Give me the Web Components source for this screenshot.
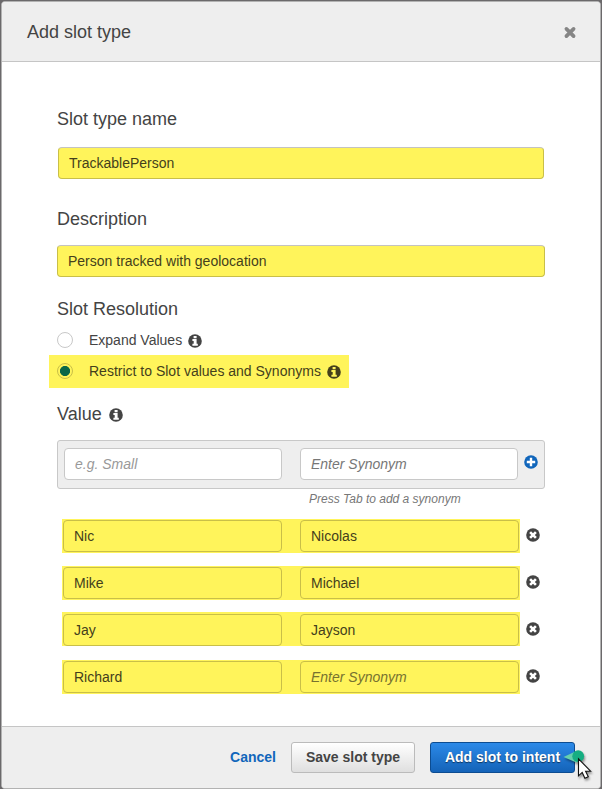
<!DOCTYPE html>
<html lang="en">
<head>
<meta charset="utf-8">
<title>Add slot type</title>
<style>
html,body{margin:0;height:100%;background:#6b696b;font-family:"Liberation Sans",Arial,sans-serif;font-size:14px;line-height:16px;color:#444}
body{overflow:hidden}
.name{margin-top:18px}
.name text-field{margin:0 1px}
.desc{margin-top:30px;--gap:16px}
.resolution{margin-top:22px;--gap:13px}
.values{margin-top:16px;--gap:16px}
</style>
</head>
<body>
<modal-dialog>
  <span slot="title">Add slot type</span>
  <form-group class="name"><span slot="label">Slot type name</span><text-field marked>TrackablePerson</text-field></form-group>
  <form-group class="desc"><span slot="label">Description</span><text-field marked>Person tracked with geolocation</text-field></form-group>
  <form-group class="resolution"><span slot="label">Slot Resolution</span>
    <radio-option>Expand Values</radio-option>
    <radio-option checked>Restrict to Slot values and Synonyms</radio-option>
  </form-group>
  <form-group class="values"><span slot="label">Value</span><glyph-icon slot="label" name="info"></glyph-icon>
    <value-entry></value-entry>
    <value-row><span>Nic</span><span slot="synonym">Nicolas</span></value-row>
    <value-row><span>Mike</span><span slot="synonym">Michael</span></value-row>
    <value-row shifted><span>Jay</span><span slot="synonym">Jayson</span></value-row>
    <value-row blank><span>Richard</span><span slot="synonym">Enter Synonym</span></value-row>
  </form-group>
  <push-button slot="footer" kind="link">Cancel</push-button>
  <push-button slot="footer">Save slot type</push-button>
  <push-button slot="footer" kind="primary">Add slot to intent</push-button>
</modal-dialog>
<click-pointer></click-pointer>
<script>
const define = (name, html) => {
  const t = document.createElement('template');
  t.innerHTML = html;
  customElements.define(name, class extends HTMLElement {
    constructor() {
      super();
      this.attachShadow({mode: 'open'}).append(t.content.cloneNode(true));
    }
  });
};

const glyphs = {
  info: '<svg viewBox="0 0 14 14" width="14" height="14"><circle cx="7" cy="7" r="6.8" fill="currentColor"/><path d="M5.6 2h3v2.2h-3zM4.4 5.1h4.2v4.6h1.2v2H4.4v-2h1.3V7.1H4.4z" fill="var(--hole,#fff)"/></svg>',
  plus: '<svg viewBox="0 0 14 14" width="14" height="14"><circle cx="7" cy="7" r="6.8" fill="currentColor"/><path d="M5.8 2.8h2.4v3h3v2.4h-3v3H5.8v-3h-3V5.8h3z" fill="#fff"/></svg>',
  remove: '<svg viewBox="0 0 14 14" width="14" height="14"><circle cx="7" cy="7" r="6.8" fill="currentColor"/><path d="M4.1 4.1l5.8 5.8M9.9 4.1L4.1 9.9" stroke="#fff" stroke-width="2.6"/></svg>',
  close: '<svg viewBox="0 0 14 14" width="14" height="14"><path d="M3.4 2.9l7.2 7.2M10.6 2.9l-7.2 7.2" stroke="currentColor" stroke-width="3.7" stroke-linecap="round"/></svg>'
};
customElements.define('glyph-icon', class extends HTMLElement {
  constructor() { super(); this.attachShadow({mode: 'open'}); }
  connectedCallback() {
    this.shadowRoot.innerHTML = '<style>:host{display:block;flex:none;width:14px;height:14px}svg{display:block}</style>' + glyphs[this.getAttribute('name')];
  }
});

define('modal-dialog', `<style>
:host{display:flex;flex-direction:column;box-sizing:border-box;width:600px;height:788px;border:1px solid #b2b2b2;border-radius:4px;background:#fff;overflow:hidden}
:host{margin:0 1px;translate:0 1px}
header{box-sizing:border-box;height:60px;background:#eee;border-bottom:1px solid #c5c5c5;display:flex;justify-content:space-between;align-items:flex-start;padding:20px 23px 0 25px;font-size:18px;line-height:20px;flex:none}
header glyph-icon{color:#858585;margin-top:4px}
main{flex:1;padding:29px 55px 0;display:flex;flex-direction:column}
footer{box-sizing:border-box;height:62px;flex:none;background:#eee;border-top:1px solid #c5c5c5;display:flex;justify-content:flex-end;padding:15px 25px 0 0}
</style><header><slot name="title"></slot><glyph-icon name="close"></glyph-icon></header><main><slot></slot></main><footer><slot name="footer"></slot></footer>`);

define('form-group', `<style>
:host{display:block}
.label{display:flex;gap:7px;font-size:18px;line-height:20px;margin-bottom:var(--gap,18px)}
::slotted(glyph-icon){margin-top:4px}
</style><div class="label"><slot name="label"></slot></div><slot></slot>`);

define('text-field', `<style>
:host{display:block;box-sizing:border-box;height:32px;border:1px solid #c8c8c8;border-radius:4px;background:#fff;padding:7px 10px;white-space:nowrap}
:host([marked]){background:#fff45b;border-color:#c9bf48;color:#443f1c}
:host([marked]:not([inner])){border-top-color:#c4c3c0}
:host([hint]){font-style:italic;color:#777}
:host([pale]){color:#999}
:host([marked][hint]){color:#777230}
</style><slot></slot>`);

define('radio-option', `<style>
:host{display:flex;align-items:flex-start;height:16px}
:host([checked]){--hole:#fff45b;background:#fff45b;color:#443f1c;height:25px;width:292px;margin:7px 0 0 -8px;padding:8px 0 0 8px}
i{box-sizing:border-box;width:16px;height:16px;border:1px solid #c8c8c8;border-radius:50%;margin-right:16px;flex:none}
:host([checked]) i{border-color:#c9bf48;background:radial-gradient(circle,#0a6747 4.7px,transparent 5.4px)}
glyph-icon{margin:2px 0 0 6px}
</style><i></i><slot></slot><glyph-icon name="info"></glyph-icon>`);

define('value-entry', `<style>
:host{display:block;height:79px}
.panel{box-sizing:border-box;height:49px;background:#eee;border:1px solid #c8c8c8;border-radius:3px;padding:7px 6px;display:grid;grid-template-columns:218px 218px 14px;column-gap:18px;align-items:start}
glyph-icon{color:#1166bb;margin:7px 0 0 -12px}
p{margin:3px 0 0 252px;font-size:12px;line-height:14px;font-style:italic;color:#777}
</style><div class="panel"><text-field hint pale>e.g. Small</text-field><text-field hint>Enter Synonym</text-field><glyph-icon name="plus"></glyph-icon></div><p>Press Tab to add a synonym</p>`);

customElements.define('value-row', class extends HTMLElement {
  constructor() { super(); this.attachShadow({mode: 'open'}); }
  connectedCallback() {
    this.shadowRoot.innerHTML = `<style>
:host{display:flex;height:34px;margin:0 0 13px 5px}
.mark{background:#fff45b;width:456px;padding:1px;display:grid;grid-template-columns:219px 219px;column-gap:18px;align-items:start}
glyph-icon{margin:9px 0 0 6px}
:host([shifted]){margin-top:-1px;height:35px}
:host([shifted]) .mark{height:31px;padding-top:2px}
:host([shifted]) glyph-icon{margin-top:10px}
</style><div class="mark"><text-field marked inner><slot></slot></text-field><text-field marked inner ${this.hasAttribute('blank') ? 'hint' : ''}><slot name="synonym"></slot></text-field></div><glyph-icon name="remove"></glyph-icon>`;
  }
});

define('push-button', `<style>
:host{display:block;box-sizing:border-box;height:31px;width:124px;margin-right:15px;border:1px solid #bbb;border-radius:3px;background:linear-gradient(#fff,#dfdfdf);font-weight:bold;text-align:center;padding-top:6px;white-space:nowrap}
:host([kind=link]){border-color:transparent;background:none;color:#1166bb;width:auto;padding-left:0;padding-right:0;margin-right:14px}
:host([kind=primary]){margin:0;width:145px;color:#fff;border-color:#0c4c91;background:linear-gradient(#2b89e8,#1463b8);text-shadow:0 1px 1px #0008}
</style><slot></slot>`);

define('click-pointer', `<style>
:host{position:absolute;left:560px;top:746px;width:34px;height:36px}svg{display:block;filter:drop-shadow(1px 2px 1px #0006)}
</style><svg viewBox="0 0 34 36" width="34" height="36"><path d="M3.5 11L17 4.8v12z" fill="#65cfae"/><circle cx="18.2" cy="10.2" r="5.9" fill="#16ae82"/><path d="M18.5 12.8v17l3.7-3.4 2.7 5.9 3.4-1.5-2.7-5.6h5z" fill="#fff" stroke="#111" stroke-width="1.1"/></svg>`);
</script>
</body>
</html>
